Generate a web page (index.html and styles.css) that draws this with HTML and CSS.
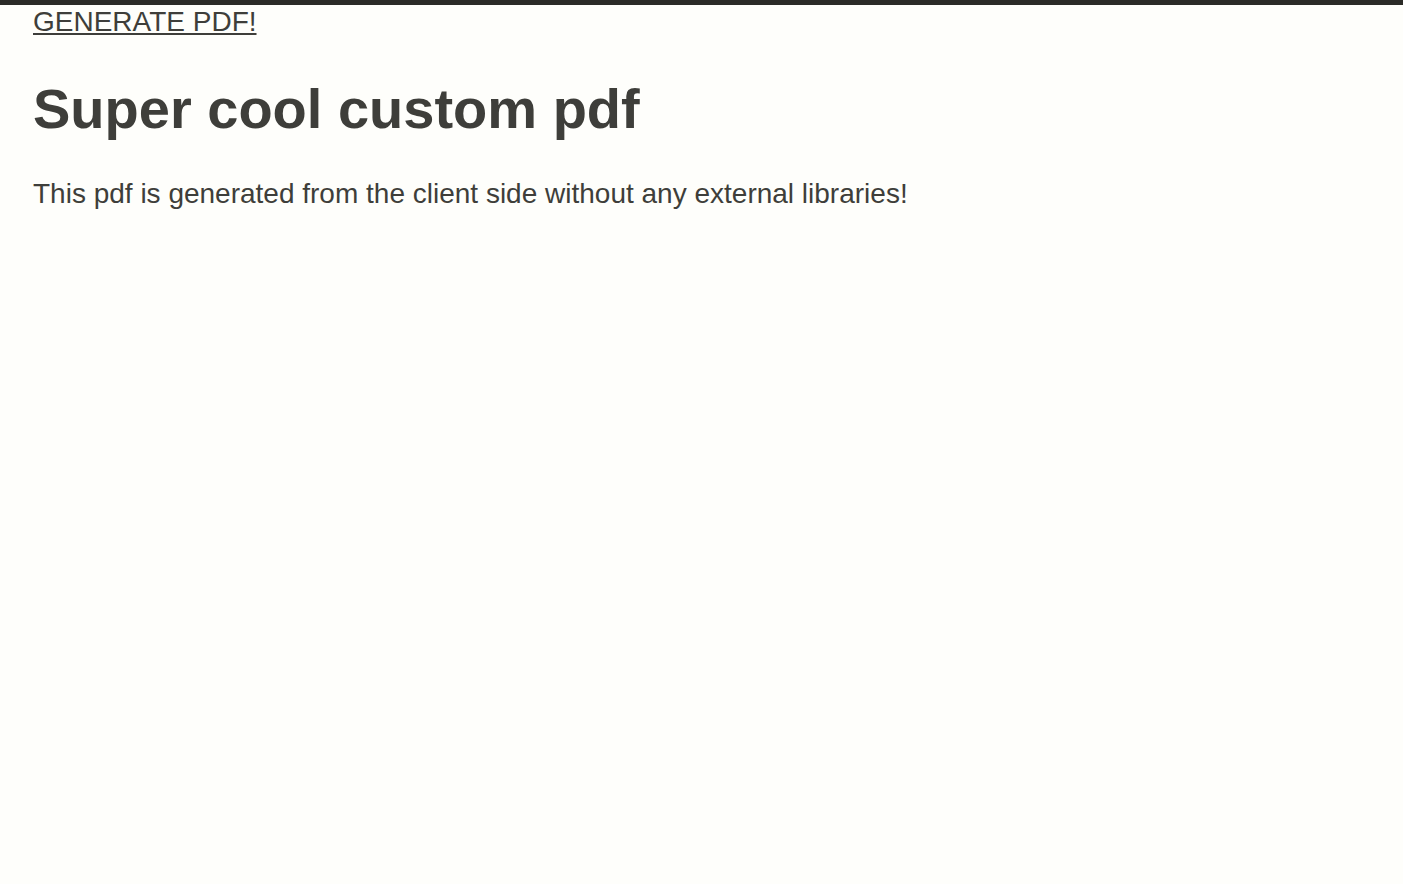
FILE: index.html
```html
<!DOCTYPE html>
<html lang="en">
<head>
    <meta name="viewport" content="width=device-width, initial-scale=1.0">
    <title>Custom PDF</title>
    <link rel="stylesheet" href="styles.css">
</head>
<body>
    <div class="container">
        <a href="#" class="generate">GENERATE PDF!</a>
        <h1>Super cool custom pdf</h1>
        <p>This pdf is generated from the client side without any external libraries!</p>
    </div>
</body>
</html>
```

FILE: styles.css
```css
body {
    font-family: "Liberation Sans", Arial, sans-serif;
    margin: 0;
    padding: 0;
    background-color: #fefefb;
    color: #3e3e3a;
    border-top: 5px solid #2b2b27;
}
.container {
    padding: 1px 33px 0;
}
.generate {
    display: inline-block;
    color: #3e3e3a;
    font-size: 28px;
    line-height: 32px;
}
h1 {
    font-size: 56px;
    margin: 39px 0 0;
    line-height: 64px;
}
p {
    font-size: 28px;
    margin: 37px 0 0;
    line-height: 32px;
}
```
